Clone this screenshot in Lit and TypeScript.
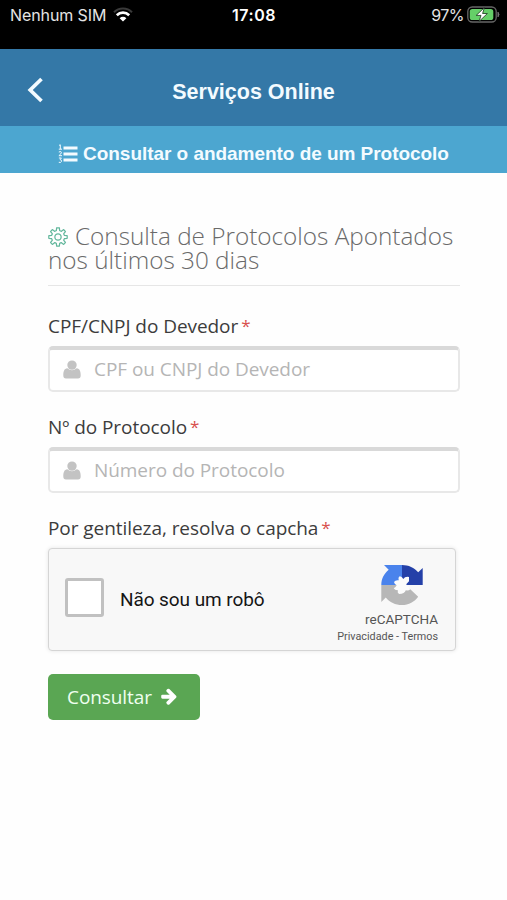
import { LitElement, html, css, svg } from "lit";
import { customElement, property } from "lit/decorators.js";

/** Outline of a cog with eight rounded teeth, centred on 0,0. */
function cogPath(): string {
  const pts: string[] = [];
  for (let i = 0; i < 8; i++) {
    const a = (i * Math.PI) / 4;
    const p = (r: number, d: number) =>
      `${(r * Math.cos(a + d)).toFixed(2)} ${(r * Math.sin(a + d)).toFixed(2)}`;
    pts.push(`${i ? "L" : "M"}${p(7, -0.25)}L${p(9.6, -0.15)}Q${p(9.9, 0)} ${p(9.6, 0.15)}L${p(7, 0.25)}Q${p(6.6, 0.39)} ${p(7, 0.535)}`);
  }
  return pts.join("") + "Z";
}

@customElement("status-bar")
class StatusBar extends LitElement {
  static styles = css`
    :host { display: grid; grid-template-columns: 1fr auto 1fr; height: 49px; box-sizing: border-box;
      padding: 5px 7px 0 10px; background: #000; color: #e4e4e4;
      font: 16px/20px Inter, sans-serif; align-items: start; }
    .side { display: flex; align-items: center; height: 20px; }
    .carrier { letter-spacing: -0.1px; }
    .right { justify-content: flex-end; }
    .time { color: #fff; font-weight: 600; letter-spacing: 0.5px; margin-right: 2px; }
    .pct { letter-spacing: -0.5px; }
    .wifi { margin: -2px 0 0 7px; }
    .battery { margin: -2px 0 0 3px; }
    svg { display: block; flex: none; }
  `;
  render() {
    return html`
      <div class="side"><span class="carrier">Nenhum SIM</span>
        <svg class="wifi" width="20" height="15" viewBox="0 0 20 15">
          <path d="M1 5.2A12.6 12.6 0 0 1 19 5.2" fill="none" stroke="#3a3a3a" stroke-width="2"/>
          <path d="M3.8 8.2A8.9 8.9 0 0 1 16.2 8.2" fill="none" stroke="#fff" stroke-width="2.7"/>
          <path d="M6.6 11.2a4.9 4.9 0 0 1 6.8 0L10 14.6z" fill="#fff"/>
        </svg>
      </div>
      <div class="time">17:08</div>
      <div class="side right"><span class="pct">97%</span>
        <svg class="battery" width="33" height="17" viewBox="0 0 33 17">
          <rect x=".8" y="1" width="28.4" height="15" rx="4.5" fill="#000" stroke="#666" stroke-width="1.3"/>
          <rect x="2.8" y="3" width="23.5" height="11" rx="2.6" fill="#65cf68"/>
          <path d="M31 6.2q2 2.3 0 4.6z" fill="#777" stroke="#777"/>
          <path d="M17.4 1.6L9.2 9.4h4.8L12.1 15.4L20.4 7.5h-4.8z" fill="#fff" stroke="#17331a" stroke-width=".8" stroke-linejoin="round"/>
        </svg>
      </div>`;
  }
}

@customElement("text-field")
class TextField extends LitElement {
  @property() label = "";
  @property() hint = "";
  static styles = css`
    :host { display: block; height: 101px; }
    .label { height: 27px; font-size: 19px; line-height: 26px; color: #3c3c3c; white-space: nowrap; letter-spacing: -0.06px; }
    .star { color: #d8504d; font-size: 17px; line-height: 1; margin-left: 3px; vertical-align: 1px; }
    .box { display: flex; align-items: center; box-sizing: border-box; width: 412px; height: 46px; margin-top: 6px;
      border: 2px solid #e8e8e8; border-top: 4px solid #d9d9d9; border-radius: 5px; background: #fff;
      padding: 0 0 3px 13px; }
    .hint { font-size: 19px; line-height: 26px; color: #b5b5b5; margin-left: 13px; white-space: nowrap; letter-spacing: -0.06px; }
    svg { display: block; margin-top: 1px; }
  `;
  render() {
    return html`
      <div class="label">${this.label}<span class="star">*</span></div>
      <div class="box">
        <svg width="18" height="19" viewBox="0 0 18 19" fill="#c3c3c3">
          <circle cx="9" cy="5.1" r="4.7"/>
          <path d="M4.3 8.3Q9 12.4 13.7 8.3C16.8 8.6 17.7 11.6 17.7 15.2Q17.7 18.5 15 18.5H3Q.3 18.5.3 15.2C.3 11.6 1.2 8.6 4.3 8.3Z"/>
        </svg>
        <span class="hint">${this.hint}</span>
      </div>`;
  }
}

@customElement("captcha-box")
class CaptchaBox extends LitElement {
  static styles = css`
    :host { display: flex; box-sizing: border-box; width: 408px; height: 103px; border: 1.5px solid #d5d5d5;
      border-radius: 4px; background: #f8f8f8; box-shadow: 0 0 4px rgba(0,0,0,.1);
      font-family: Roboto, sans-serif; align-items: center; padding: 0 17px 0 16px; }
    .check { box-sizing: border-box; width: 39px; height: 39px; border: 3px solid #c1c1c1; border-radius: 3px; background: #fff; margin-top: -4px; }
    .text { font-size: 19px; color: #151515; margin: -1px 0 0 16px; flex: 1; white-space: nowrap; letter-spacing: -0.08px; }
    .brand { display: flex; flex-direction: column; align-items: flex-end; align-self: stretch; padding-top: 15px; color: #555; }
    .logo { display: block; margin-right: 15px; }
    .name { font-size: 13.5px; line-height: 16px; margin-top: 5px; }
    .links { font-size: 10.8px; line-height: 14px; margin-top: 3px; white-space: nowrap; }
  `;
  render() {
    return html`
      <div class="check"></div>
      <div class="text">Não sou um robô</div>
      <div class="brand">
        <svg class="logo" width="42" height="42" viewBox="0 0 42 42">
          <path fill="#4a83ec" d="M21 1H3L7.7 5.8C3 9.6.3 15 .3 21H21Z"/>
          <path fill="#2440a8" d="M21 1C27.5 1 33.4 3.8 37.2 8.2L41.7 4V21H21Z"/>
          <path fill="#b7b7b7" d="M.3 21V38L4.8 33.4C8.6 38.1 14.4 41 21 41C27.7 41 33.6 37.8 37.2 32.7L29 25L21 21Z"/>
          <path fill="#fbfbfb" d="M13 18Q14.5 15.7 17.8 16.3Q16.8 13.2 19 12.3Q21.2 12.8 22.3 15Q24 12.3 28 13V17.3L25.2 20.3L29.3 25.2Q27.8 26.8 24.8 26.3Q23.8 30 18 30Q15.8 28.4 17 26.3Q14 26.6 12.7 24.2Q14.8 23.4 15.7 21.2Q13.5 20.3 13 18Z"/>
        </svg>
        <div class="name">reCAPTCHA</div>
        <div class="links">Privacidade - Termos</div>
      </div>`;
  }
}

@customElement("app-root")
class AppRoot extends LitElement {
  static styles = css`
    :host { display: block; height: 900px; overflow: hidden; background: #fefefe; font-family: "Open Sans", sans-serif; }
    .header { display: grid; grid-template-columns: 60px 1fr 60px; align-items: center; height: 77px; background: #3478a7;
      color: #f3fbff; font: bold 21.5px/26px "Liberation Sans", sans-serif; }
    .back { display: block; margin: 4px 0 0 27px; }
    .title { text-align: center; padding-top: 8px; }
    .sub { display: flex; align-items: center; justify-content: center; height: 47px; background: #4ca6d0; color: #f3fbff;
      font: bold 19px/24px "Liberation Sans", sans-serif; padding-top: 8px; box-sizing: border-box; white-space: nowrap; letter-spacing: -0.04px; }
    .list { margin-right: 5px; }
    .page { padding: 51px 47px 0 48px; }
    .heading { margin: 0; font-weight: 300; font-size: 24.3px; line-height: 24px; color: #6a6a6a; height: 62px;
      box-sizing: border-box; border-bottom: 1px solid #e6e6e6; white-space: nowrap; }
    .line { display: block; height: 24px; }
    .cog { width: 20px; height: 20px; vertical-align: -2px; margin-right: 7px; }
    .fields { padding-top: 27px; }
    .label { height: 27px; font-size: 19px; line-height: 26px; color: #3c3c3c; white-space: nowrap; letter-spacing: -0.06px; }
    .star { color: #d8504d; font-size: 17px; line-height: 1; margin-left: 3px; vertical-align: 1px; }
    .captcha { margin-top: 6px; }
    .go { display: flex; align-items: center; box-sizing: border-box; width: 152px; height: 46px; margin-top: 23px; border: 0;
      border-radius: 5px; background: #5aa653; color: #effff0; font: 19px/26px "Open Sans", sans-serif; padding: 0 0 1px 19px; letter-spacing: -0.08px; }
    .arrow { margin-left: 8px; }
  `;
  render() {
    return html`
      <status-bar></status-bar>
      <div class="header">
        <svg class="back" width="17" height="26" viewBox="0 0 17 26"><path d="M14.5 2L3.2 13L14.5 24" fill="none" stroke="#f3fbff" stroke-width="3.7"/></svg>
        <div class="title">Serviços Online</div>
      </div>
      <div class="sub">
        <svg class="list" width="20" height="20" viewBox="0 0 20 20" fill="none" stroke="#f3fbff">
          <path d="M5.5 4H19.5M5.5 10H19.5M5.5 16H19.5" stroke-width="2.9"/>
          <path d="M1 1.4L2.3 .8V5M.8 5.2H4M.8 8Q3.5 6.8 3.4 8.6Q3.3 9.8 .9 11.7H4M.9 14H3.4L2.1 15.6Q3.8 15.8 3.5 17.4Q3 19 .8 18.3" stroke-width="1"/>
        </svg>
        <span>Consultar o andamento de um Protocolo</span>
      </div>
      <div class="page">
        <h1 class="heading"><span class="line"><svg class="cog" viewBox="-10.5 -10.5 21 21" fill="none" stroke="#62b79c" stroke-width="1.3">${svg`<path d=${cogPath()} /><circle r="3.3"/>`}</svg>Consulta de Protocolos Apontados</span><span class="line">nos últimos 30 dias</span></h1>
        <div class="fields">
          <text-field label="CPF/CNPJ do Devedor" hint="CPF ou CNPJ do Devedor"></text-field>
          <text-field label="Nº do Protocolo" hint="Número do Protocolo"></text-field>
          <div class="label">Por gentileza, resolva o capcha<span class="star">*</span></div>
          <captcha-box class="captcha"></captcha-box>
          <button class="go">Consultar
            <svg class="arrow" width="17" height="17" viewBox="90 120 1610 1640" fill="#fff"><path d="M1664 960q0 54-37 91l-651 651q-39 37-91 37-51 0-90-37l-75-75q-38-38-38-91t38-91l293-293h-704q-52 0-84.5-37.5t-32.5-90.5v-128q0-53 32.5-90.5t84.5-37.5h704l-293-294q-38-36-38-90t38-90l75-75q38-38 90-38 53 0 91 38l651 651q37 35 37 90z"/></svg>
          </button>
        </div>
      </div>`;
  }
}
